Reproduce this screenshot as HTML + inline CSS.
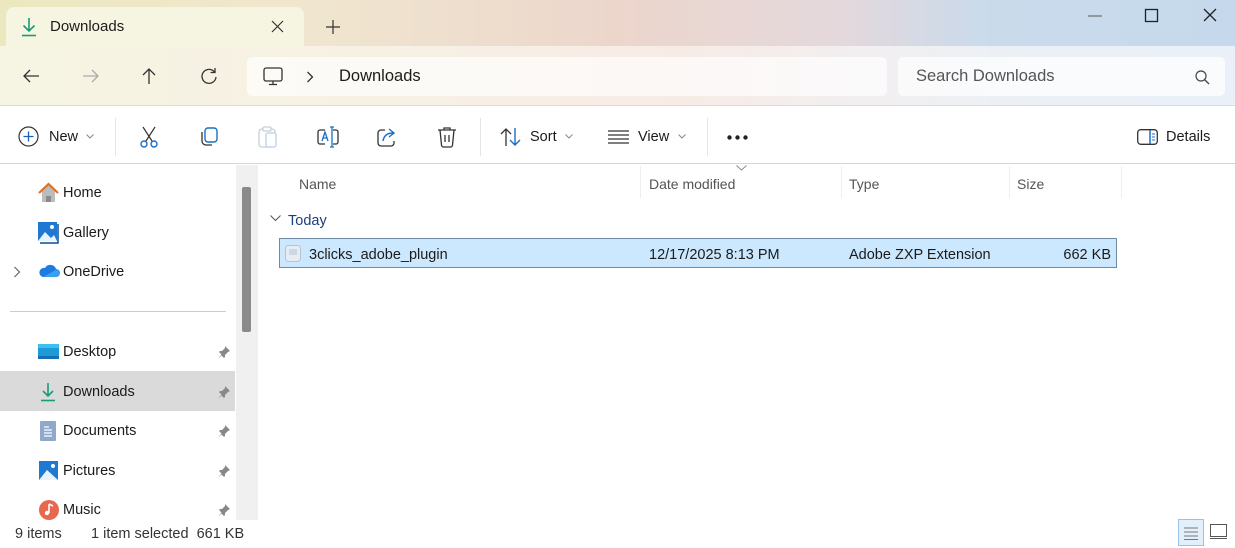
<!DOCTYPE html>
<html><head><meta charset="utf-8"><style>
*{margin:0;padding:0;box-sizing:border-box}
body{width:1235px;height:548px;overflow:hidden;font-family:"Liberation Sans",sans-serif;color:#1b1b1b;position:relative;background:#fff}
.top{position:absolute;left:0;top:0;width:1235px;height:106px;background:linear-gradient(90deg,#ebe8bf 0%,#f0e6cf 25%,#ecd6cc 50%,#e4d8dc 68%,#c9dbeb 80%,#c6d9ec 100%)}
.row2{position:absolute;left:0;top:46px;width:1235px;height:60px;background:linear-gradient(90deg,#f6f4e2 0%,#f7f1e4 30%,#f7ebe6 55%,#f2eff0 70%,#eaf0f6 85%,#eaf0f7 100%);border-bottom:1px solid #e3dfb8}
.tab{position:absolute;left:6px;top:7px;width:298px;height:40px;background:#f6f5e2;border-radius:8px 8px 0 0}
.t{position:absolute;white-space:nowrap}
.addr{position:absolute;left:247px;top:57px;width:640px;height:39px;background:rgba(255,255,255,.65);border-radius:5px}
.search{position:absolute;left:898px;top:57px;width:327px;height:39px;background:rgba(255,255,255,.7);border-radius:5px}
.tb{position:absolute;left:0;top:106px;width:1235px;height:58px;background:#fff;border-bottom:1px solid #ddd8b8}
.sep{position:absolute;width:1px;background:#e5e5e5;top:118px;height:38px}
svg{position:absolute;overflow:visible}
.nav{position:absolute;left:0;top:165px;width:236px;height:355px;background:#fff}
.sb{position:absolute;left:236px;top:165px;width:22px;height:355px;background:#f0f0f0}
.n{position:absolute;left:63px;font-size:14.5px}
.hdr{position:absolute;top:176px;font-size:14px;color:#555}
.col{position:absolute;top:166px;height:32px;width:1px;background:#eee}
.status{position:absolute;left:0;top:520px;width:1235px;height:28px;background:#fff}
.f{font-size:14.5px}
</style></head><body>
<div class="top"></div>
<div class="row2"></div>
<div class="tab"></div>
<svg style="left:20px;top:17px" width="18" height="20" viewBox="0 0 18 20"><path d="M9 1v13M3.5 8.5 9 14l5.5-5.5" stroke="#1a9a7a" stroke-width="1.6" fill="none"/><path d="M2 18.5h14" stroke="#1a9a7a" stroke-width="1.6"/></svg>
<div class="t" style="left:50px;top:18px;font-size:15px">Downloads</div>
<svg style="left:271px;top:20px" width="13" height="13"><path d="M1 1l11 11M12 1 1 12" stroke="#333" stroke-width="1.2"/></svg>
<svg style="left:326px;top:20px" width="14" height="14"><path d="M7 0v14M0 7h14" stroke="#333" stroke-width="1.2"/></svg>
<svg style="left:1088px;top:15px" width="14" height="2"><path d="M0 1h14" stroke="#555" stroke-width="1"/></svg>
<svg style="left:1145px;top:9px" width="13" height="13"><rect x=".5" y=".5" width="12" height="12" fill="none" stroke="#222" stroke-width="1.3"/></svg>
<svg style="left:1203px;top:8px" width="14" height="14"><path d="M1 1l12 12M13 1 1 13" stroke="#222" stroke-width="1.3"/></svg>
<svg style="left:22px;top:68px" width="18" height="16"><path d="M17 8H2M8 2 2 8l6 6" stroke="#333" stroke-width="1.3" fill="none"/></svg>
<svg style="left:82px;top:68px" width="18" height="16"><path d="M1 8h15M10 2l6 6-6 6" stroke="#aaa" stroke-width="1.3" fill="none"/></svg>
<svg style="left:141px;top:67px" width="16" height="18"><path d="M8 17V2M2 8l6-6 6 6" stroke="#333" stroke-width="1.3" fill="none"/></svg>
<svg style="left:200px;top:67px" width="18" height="18"><path d="M14.5 5A7 7 0 1 0 16 10" stroke="#333" stroke-width="1.3" fill="none"/><path d="M15 1v4.5h-4.5" stroke="#333" stroke-width="1.3" fill="none"/></svg>
<div class="addr"></div>
<svg style="left:263px;top:67px" width="20" height="19"><rect x="1" y="1" width="18" height="13" rx="2" fill="none" stroke="#333" stroke-width="1.3"/><path d="M6 17.5h8M10 14v3" stroke="#333" stroke-width="1.3"/></svg>
<svg style="left:306px;top:71px" width="8" height="12"><path d="M1.5 1l5 5-5 5" stroke="#333" stroke-width="1.3" fill="none"/></svg>
<div class="t" style="left:339px;top:67px;font-size:16.5px">Downloads</div>
<div class="search"></div>
<div class="t" style="left:916px;top:67px;font-size:16.5px;color:#555">Search Downloads</div>
<svg style="left:1195px;top:70px" width="15" height="15"><circle cx="6" cy="6" r="5" fill="none" stroke="#444" stroke-width="1.2"/><path d="M9.5 9.5 14 14" stroke="#444" stroke-width="1.3"/></svg>
<div class="tb"></div>
<svg style="left:18px;top:126px" width="21" height="21"><circle cx="10.5" cy="10.5" r="9.5" fill="none" stroke="#333" stroke-width="1.2"/><path d="M10.5 5.5v10M5.5 10.5h10" stroke="#1a5fb4" stroke-width="1.3"/></svg>
<div class="t f" style="left:49px;top:129px">New</div>
<svg style="left:86px;top:134px" width="8" height="5"><path d="M.5.5 4 4 7.5.5" stroke="#888" fill="none"/></svg>
<div class="sep" style="left:115px"></div>
<svg style="left:139px;top:126px" width="20" height="22"><path d="M4 1l9 14M16 1 7 15" stroke="#333" stroke-width="1.2"/><circle cx="5" cy="18" r="3" fill="none" stroke="#1a6fc4" stroke-width="1.4"/><circle cx="15" cy="18" r="3" fill="none" stroke="#1a6fc4" stroke-width="1.4"/></svg>
<svg style="left:199px;top:127px" width="20" height="20"><rect x="6" y="1" width="12" height="14" rx="3" fill="none" stroke="#1a6fc4" stroke-width="1.4"/><path d="M3 5v9a4 4 0 0 0 4 4h6" stroke="#333" stroke-width="1.3" fill="none"/></svg>
<svg style="left:258px;top:126px" width="20" height="22"><rect x="1" y="3" width="16" height="18" rx="3" fill="none" stroke="#c5cfd8" stroke-width="1.3"/><rect x="8" y="7" width="10" height="14" rx="2" fill="#fff" stroke="#b9d0e6" stroke-width="1.3"/><rect x="5" y="1" width="8" height="4" rx="1" fill="#fff" stroke="#c5cfd8" stroke-width="1.2"/></svg>
<svg style="left:317px;top:126px" width="22" height="22"><path d="M8 4H3a2 2 0 0 0-2 2v10a2 2 0 0 0 2 2h5M16 4h3a2 2 0 0 1 2 2v10a2 2 0 0 1-2 2h-3" stroke="#333" stroke-width="1.3" fill="none"/><path d="M5 15l3-9 3 9M6 12h4" stroke="#1a6fc4" stroke-width="1.3" fill="none"/><path d="M13 1h4M15 1v20M13 21h4" stroke="#1a6fc4" stroke-width="1.3"/></svg>
<svg style="left:377px;top:126px" width="21" height="21"><path d="M8 4H4a3 3 0 0 0-3 3v10a3 3 0 0 0 3 3h10a3 3 0 0 0 3-3v-2" stroke="#333" stroke-width="1.3" fill="none"/><path d="M6 15c1-6 5-8 10-8M12 3l5 4-5 4" stroke="#1a6fc4" stroke-width="1.4" fill="none"/></svg>
<svg style="left:437px;top:126px" width="20" height="22"><path d="M1 4h18M7 4V2h6v2M3 4l1.5 15a2 2 0 0 0 2 2h7a2 2 0 0 0 2-2L17 4" stroke="#333" stroke-width="1.3" fill="none"/><path d="M8 9v7M12 9v7" stroke="#333" stroke-width="1.3"/></svg>
<div class="sep" style="left:480px"></div>
<svg style="left:500px;top:127px" width="22" height="20"><path d="M6 19V2M1 7l5-5 5 5" stroke="#333" stroke-width="1.3" fill="none"/><path d="M15 1v17M10 13l5 5 5-5" stroke="#1a6fc4" stroke-width="1.4" fill="none"/></svg>
<div class="t f" style="left:530px;top:129px">Sort</div>
<svg style="left:565px;top:134px" width="8" height="5"><path d="M.5.5 4 4 7.5.5" stroke="#888" fill="none"/></svg>
<svg style="left:608px;top:130px" width="21" height="14"><path d="M0 1h21M0 5h21M0 9h21M0 13h21" stroke="#333" stroke-width="1.2"/></svg>
<div class="t f" style="left:638px;top:129px">View</div>
<svg style="left:678px;top:134px" width="8" height="5"><path d="M.5.5 4 4 7.5.5" stroke="#888" fill="none"/></svg>
<div class="sep" style="left:707px"></div>
<svg style="left:727px;top:135px" width="22" height="5"><circle cx="2.5" cy="2.5" r="2.2" fill="#222"/><circle cx="10.5" cy="2.5" r="2.2" fill="#222"/><circle cx="18.5" cy="2.5" r="2.2" fill="#222"/></svg>
<svg style="left:1137px;top:129px" width="21" height="16"><rect x=".7" y=".7" width="19.6" height="14.6" rx="3" fill="none" stroke="#333" stroke-width="1.3"/><path d="M13 1v14" stroke="#1a6fc4" stroke-width="1.5"/><path d="M15 5h3M15 8h3M15 11h3" stroke="#1a6fc4" stroke-width="1.1"/></svg>
<div class="t f" style="left:1166px;top:129px">Details</div>
<div class="nav"></div>
<svg style="left:38px;top:183px" width="21" height="20"><path d="M4 8v11h13V8l-6.5-6z" fill="#bcbcbc"/><path d="M1 10 10.5 1 20 10" stroke="#e07026" stroke-width="2.2" fill="none"/><rect x="8" y="13" width="5" height="6" fill="#8a8a8a"/></svg>
<div class="n" style="top:185px">Home</div>
<svg style="left:38px;top:222px" width="21" height="21"><rect x="0" y="0" width="19" height="19" fill="#1f78d1"/><path d="M0 19 7 10l6 6 3-3 3 6z" fill="#e9f3fd"/><circle cx="14" cy="5" r="2" fill="#fff"/><path d="M20 2v19H2" stroke="#0c4f97" stroke-width="1.5" fill="none"/></svg>
<div class="n" style="top:225px">Gallery</div>
<svg style="left:13px;top:266px" width="8" height="12"><path d="M1.5 1l5 5-5 5" stroke="#666" stroke-width="1.2" fill="none"/></svg>
<svg style="left:38px;top:264px" width="22" height="14"><path d="M5 13h13a4 4 0 0 0 0-8 6 6 0 0 0-11-1 4.5 4.5 0 0 0-2 9z" fill="#1d7be0"/><path d="M5 13h13a4 4 0 0 0 1-7.7" fill="#3aa0f0"/></svg>
<div class="n" style="top:264px">OneDrive</div>
<div style="position:absolute;left:10px;top:311px;width:216px;height:1px;background:#ccc"></div>
<svg style="left:38px;top:344px" width="21" height="15"><rect width="21" height="15" rx="1" fill="#1e9ad8"/><rect width="21" height="4" fill="#3cc0f0"/><rect y="12" width="21" height="3" fill="#1570b3"/></svg>
<div class="n" style="top:344px">Desktop</div>
<div style="position:absolute;left:0;top:371px;width:235px;height:40px;background:#dadada"></div>
<svg style="left:40px;top:382px" width="16" height="20"><path d="M8 1v13M3 9l5 5 5-5" stroke="#1a9a7a" stroke-width="1.6" fill="none"/><path d="M1 18.5h14" stroke="#1a9a7a" stroke-width="1.6"/></svg>
<div class="n" style="top:384px">Downloads</div>
<svg style="left:40px;top:421px" width="17" height="20"><rect width="16" height="20" rx="1" fill="#8fa9cc"/><path d="M4 6h5M4 9h8M4 12h8M4 15h8" stroke="#fff" stroke-width="1.2"/></svg>
<div class="n" style="top:423px">Documents</div>
<svg style="left:39px;top:461px" width="19" height="19"><rect width="19" height="19" fill="#1f78d1"/><path d="M0 19 8 9l11 10z" fill="#e9f3fd"/><circle cx="14" cy="5" r="2" fill="#fff"/></svg>
<div class="n" style="top:463px">Pictures</div>
<svg style="left:39px;top:500px" width="20" height="20"><circle cx="10" cy="10" r="10" fill="#e8674f"/><path d="M10 4v9" stroke="#fff" stroke-width="1.6"/><circle cx="8" cy="13" r="2.2" fill="#fff"/><path d="M10 4l4 2" stroke="#fff" stroke-width="1.6"/></svg>
<div class="n" style="top:502px">Music</div>
<svg style="left:217px;top:345px" width="14" height="14"><path d="M8 1l5 5-2 1-3 3 0 2-1 1-2.5-2.5L1 14l3.5-4.5L2 7l1-1h2l3-3z" fill="#888"/></svg>
<svg style="left:217px;top:385px" width="14" height="14"><path d="M8 1l5 5-2 1-3 3 0 2-1 1-2.5-2.5L1 14l3.5-4.5L2 7l1-1h2l3-3z" fill="#888"/></svg>
<svg style="left:217px;top:424px" width="14" height="14"><path d="M8 1l5 5-2 1-3 3 0 2-1 1-2.5-2.5L1 14l3.5-4.5L2 7l1-1h2l3-3z" fill="#888"/></svg>
<svg style="left:217px;top:464px" width="14" height="14"><path d="M8 1l5 5-2 1-3 3 0 2-1 1-2.5-2.5L1 14l3.5-4.5L2 7l1-1h2l3-3z" fill="#888"/></svg>
<svg style="left:217px;top:503px" width="14" height="14"><path d="M8 1l5 5-2 1-3 3 0 2-1 1-2.5-2.5L1 14l3.5-4.5L2 7l1-1h2l3-3z" fill="#888"/></svg>
<div class="sb"></div>
<div style="position:absolute;left:242px;top:187px;width:9px;height:145px;background:#8a8a8a;border-radius:2px"></div>
<div class="hdr" style="left:299px">Name</div>
<div class="col" style="left:640px"></div>
<div class="hdr" style="left:649px">Date modified</div>
<svg style="left:736px;top:165px" width="11" height="6"><path d="M.5.5 5.5 5 10.5.5" stroke="#888" fill="none"/></svg>
<div class="col" style="left:841px"></div>
<div class="hdr" style="left:849px">Type</div>
<div class="col" style="left:1009px"></div>
<div class="hdr" style="left:1017px">Size</div>
<div class="col" style="left:1121px"></div>
<svg style="left:270px;top:215px" width="11" height="7"><path d="M.5.5 5.5 5.5 10.5.5" stroke="#555" fill="none"/></svg>
<div class="t" style="left:288px;top:213px;font-size:14.5px;color:#1e3e7a">Today</div>
<div style="position:absolute;left:279px;top:238px;width:838px;height:30px;background:#cce8ff;border:1px solid #6f8aa3"></div>
<svg style="left:285px;top:245px" width="16" height="17"><rect x=".5" y=".5" width="15" height="16" rx="3" fill="#e6ecf3" stroke="#b8c3cf"/><rect x="4" y="4" width="8" height="6" fill="#cbd7e4"/></svg>
<div class="t f" style="left:309px;top:247px">3clicks_adobe_plugin</div>
<div class="t f" style="left:649px;top:247px">12/17/2025 8:13 PM</div>
<div class="t f" style="left:849px;top:247px">Adobe ZXP Extension</div>
<div class="t f" style="right:124px;top:247px">662 KB</div>
<div class="status"></div>
<div class="t" style="left:15px;top:526px;font-size:14.5px;color:#333">9 items</div>
<div class="t" style="left:91px;top:526px;font-size:14.5px;color:#333">1 item selected&nbsp; 661 KB</div>
<div style="position:absolute;left:1178px;top:519px;width:26px;height:27px;background:#e3f0fb;border:1px solid #99c3e6"></div>
<svg style="left:1184px;top:527px" width="14" height="13"><path d="M0 1h14M0 5h14M0 9h14M0 12.5h14" stroke="#777" stroke-width="1"/></svg>
<svg style="left:1210px;top:524px" width="17" height="15"><rect x=".5" y=".5" width="16" height="12" fill="none" stroke="#555"/><path d="M0 14.5h17" stroke="#555"/></svg>
</body></html>
